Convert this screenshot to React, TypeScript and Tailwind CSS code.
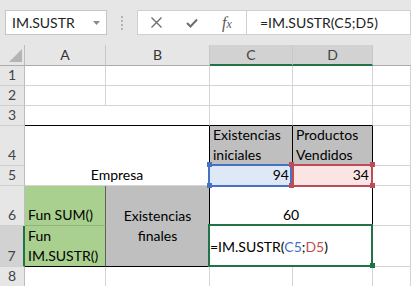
import React from "react";

const g = "border-r border-b border-r-[#d4d4d4] border-b-[#d4d4d4] bg-white";
const rh =
  "flex items-end justify-center border-r border-b border-r-[#bdbdbd] border-b-[#cfcfcf] bg-[#e6e6e6] text-[14px] text-[#444]";

function Corner({ color, className }: { color: string; className: string }) {
  return <span className={`absolute h-[5px] w-[5px] ${color} ${className}`} />;
}

export default function App() {
  return (
    <div className="h-[286px] w-[411px] overflow-hidden bg-[#e6e6e6] font-['Lato',sans-serif] text-black">
      {/* formula bar */}
      <div className="flex h-[45px] items-start pl-[5px] pt-[10px]">
        <div className="flex h-[25px] w-[102px] items-center justify-between border border-[#c6c6c6] bg-white pl-[6px] pr-[6px] text-[14px] text-[#222]">
          <span>IM.SUSTR</span>
          <svg width="7" height="4" viewBox="0 0 7 4">
            <polygon points="0,0 7,0 3.5,4" fill="#8a8a8a" />
          </svg>
        </div>
        <div className="flex h-[25px] w-[30px] flex-col items-center justify-center gap-[2px]">
          <span className="h-[2px] w-[2px] bg-[#b4b4b4]" />
          <span className="h-[2px] w-[2px] bg-[#b4b4b4]" />
          <span className="h-[2px] w-[2px] bg-[#b4b4b4]" />
          <span className="h-[2px] w-[2px] bg-[#b4b4b4]" />
        </div>
        <div className="flex h-[25px] w-[110px] items-center gap-[24px] border border-[#d0d0d0] bg-white pl-[13px]">
          <svg width="11" height="11" viewBox="0 0 11 11">
            <path d="M0.5 0.5 L10.5 10.5 M10.5 0.5 L0.5 10.5" stroke="#6e6e6e" strokeWidth="1.4" />
          </svg>
          <svg width="12" height="10" viewBox="0 0 12 10">
            <path d="M1 5 L4.5 8.5 L11 1.5" stroke="#6e6e6e" strokeWidth="2" fill="none" />
          </svg>
          <span className="font-['Liberation_Serif',serif] italic leading-none text-[#5a5a5a]">
            <span className="text-[16px]">f</span>
            <span className="text-[12px]">x</span>
          </span>
        </div>
        <div className="flex h-[25px] flex-1 items-center border-y border-r border-[#d0d0d0] bg-white pl-[13px] text-[14px] text-[#222]">
          =IM.SUSTR(C5;D5)
        </div>
      </div>

      {/* sheet */}
      <div className="grid grid-cols-[25px_81px_104px_83px_80px_38px] grid-rows-[21px_20px_20px_20px_40px_20px_40px_41px_20px] text-[14px] leading-[20px]">
        {/* column headers */}
        <div className="relative border-r border-b border-r-[#bdbdbd] border-b-[#ababab]">
          <svg width="25" height="20" viewBox="0 0 25 20" className="absolute left-0 top-0">
            <polygon points="22,4 22,17 9,17" fill="#b4b4b4" />
          </svg>
        </div>
        <div className="flex items-center justify-center border-r border-b border-r-[#c8c8c8] border-b-[#ababab] text-[14px] text-[#333]">A</div>
        <div className="flex items-center justify-center border-r border-b border-r-[#c8c8c8] border-b-[#ababab] text-[14px] text-[#333]">B</div>
        <div className="flex items-center justify-center border-r border-b-2 border-r-[#c8c8c8] border-b-[#217346] bg-[#d2d2d2] text-[14px] text-[#444]">C</div>
        <div className="flex items-center justify-center border-r border-b-2 border-r-[#c8c8c8] border-b-[#217346] bg-[#d2d2d2] text-[14px] text-[#444]">D</div>
        <div className="border-b border-b-[#ababab]" />

        {/* row 1 */}
        <div className={rh}>1</div>
        <div className={g} />
        <div className={g} />
        <div className={g} />
        <div className={g} />
        <div className={g} />

        {/* row 2 */}
        <div className={rh}>2</div>
        <div className={g} />
        <div className={g} />
        <div className={g} />
        <div className={g} />
        <div className={g} />

        {/* row 3 */}
        <div className={rh}>3</div>
        <div className="border-b border-b-black bg-white" />
        <div className="border-r border-b border-r-[#d4d4d4] border-b-black bg-white" />
        <div className="border-r border-b border-r-[#d4d4d4] border-b-black bg-white" />
        <div className="border-r border-b border-r-[#d4d4d4] border-b-black bg-white" />
        <div className={g} />

        {/* row 4 */}
        <div className={rh}>4</div>
        <div className="col-span-2 row-span-2 flex items-end justify-center border-r border-b border-r-black border-b-[#d4d4d4] bg-white">
          Empresa
        </div>
        <div className="flex flex-col justify-end border-r border-b border-r-black border-b-black bg-[#bfbfbf] px-[3px]">
          <span>Existencias</span>
          <span>iniciales</span>
        </div>
        <div className="flex flex-col justify-end border-r border-b border-r-black border-b-black bg-[#bfbfbf] px-[3px]">
          <span>Productos</span>
          <span>Vendidos</span>
        </div>
        <div className={g} />

        {/* row 5 */}
        <div className={rh}>5</div>
        <div className="relative flex items-end justify-end border-r border-b border-r-[#d4d4d4] border-b-[#d4d4d4] bg-[#dfe8f6] pr-[3px]">
          94
          <span className="absolute -bottom-[2px] -left-[2px] -top-[2px] right-0 border-2 border-[#4472c4]" />
          <Corner color="bg-[#4472c4]" className="-left-[3px] -top-[4px]" />
          <Corner color="bg-[#4472c4]" className="-bottom-[3px] -left-[3px]" />
        </div>
        <div className="relative flex items-end justify-end border-r border-b border-r-black border-b-[#d4d4d4] bg-[#fbe4e4] pr-[3px]">
          34
          <span className="absolute -bottom-[2px] -left-[1px] -right-[1px] -top-[2px] border-2 border-[#be4b55]" />
          <Corner color="bg-[#be4b55]" className="-left-[4px] -top-[4px]" />
          <Corner color="bg-[#be4b55]" className="-bottom-[3px] -left-[4px]" />
          <Corner color="bg-[#be4b55]" className="-right-[3px] -top-[4px]" />
          <Corner color="bg-[#be4b55]" className="-bottom-[3px] -right-[3px]" />
        </div>
        <div className={g} />

        {/* row 6 */}
        <div className={rh}>6</div>
        <div className="flex items-end border-r border-b border-r-[#5f5f5f] border-b-[#93b17d] bg-[#a9d08e] px-[3px]">
          Fun SUM()
        </div>
        <div className="row-span-2 flex flex-col items-center justify-center border-r border-b border-r-black border-b-black bg-[#bfbfbf] pb-[1px]">
          <span>Existencias</span>
          <span>finales</span>
        </div>
        <div className="col-span-2 flex items-end justify-center border-r border-b border-r-black border-b-[#d4d4d4] bg-white">
          60
        </div>
        <div className={g} />

        {/* row 7 */}
        <div className="flex items-end justify-center border-r-2 border-b border-r-[#217346] border-b-[#cfcfcf] bg-[#d2d2d2] text-[14px] text-[#444]">
          7
        </div>
        <div className="flex flex-col justify-end border-r border-b border-r-[#5f5f5f] border-b-black bg-[#a9d08e] px-[3px]">
          <span>Fun</span>
          <span>IM.SUSTR()</span>
        </div>
        <div className="relative col-span-2 flex items-center border-r border-b border-r-black border-b-black bg-white pt-[2px]">
          <span>
            =IM.SUSTR(<span className="text-[#4472c4]">C5</span>;<span className="text-[#c0504d]">D5</span>)
          </span>
          <span className="absolute -bottom-[1px] -left-[2px] -right-[1px] -top-[2px] border-2 border-[#217346]">
            <span className="absolute -bottom-[3px] -right-[4px] h-[5px] w-[5px] bg-[#217346]" />
          </span>
        </div>
        <div className={g} />

        {/* row 8 */}
        <div className={rh}>8</div>
        <div className={g} />
        <div className={g} />
        <div className={g} />
        <div className={g} />
        <div className={g} />
      </div>
    </div>
  );
}
